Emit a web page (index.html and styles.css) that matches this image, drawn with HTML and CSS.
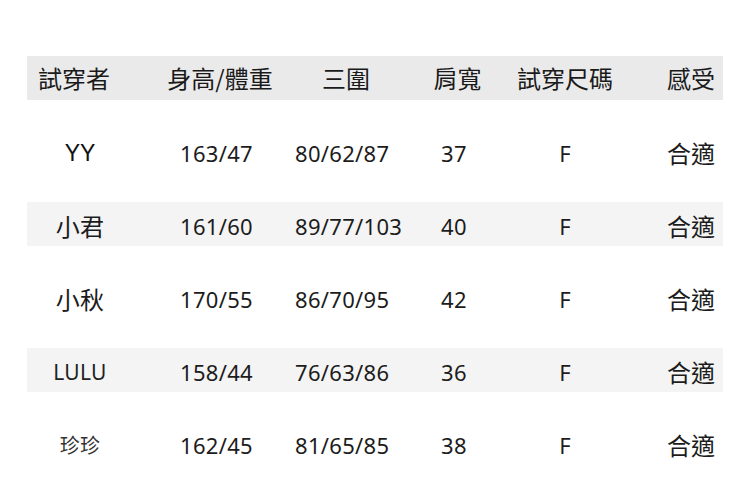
FILE: index.html
```html
<!DOCTYPE html>
<html lang="zh-Hant">
<head>
<meta charset="utf-8">
<link rel="stylesheet" href="styles.css">
</head>
<body>
<div class="size-table">
  <div class="row head">
    <div class="c c1">試穿者</div>
    <div class="c c2">身高/體重</div>
    <div class="c c3">三圍</div>
    <div class="c c4">肩寬</div>
    <div class="c c5">試穿尺碼</div>
    <div class="c c6">感受</div>
  </div>
  <div class="row">
    <div class="c c1 latin">YY</div>
    <div class="c c2">163/47</div>
    <div class="c c3">80/62/87</div>
    <div class="c c4">37</div>
    <div class="c c5">F</div>
    <div class="c c6">合適</div>
  </div>
  <div class="row shade">
    <div class="c c1">小君</div>
    <div class="c c2">161/60</div>
    <div class="c c3">89/77/103</div>
    <div class="c c4">40</div>
    <div class="c c5">F</div>
    <div class="c c6">合適</div>
  </div>
  <div class="row">
    <div class="c c1">小秋</div>
    <div class="c c2">170/55</div>
    <div class="c c3">86/70/95</div>
    <div class="c c4">42</div>
    <div class="c c5">F</div>
    <div class="c c6">合適</div>
  </div>
  <div class="row shade">
    <div class="c c1 small">LULU</div>
    <div class="c c2">158/44</div>
    <div class="c c3">76/63/86</div>
    <div class="c c4">36</div>
    <div class="c c5">F</div>
    <div class="c c6">合適</div>
  </div>
  <div class="row">
    <div class="c c1 light">珍珍</div>
    <div class="c c2">162/45</div>
    <div class="c c3">81/65/85</div>
    <div class="c c4">38</div>
    <div class="c c5">F</div>
    <div class="c c6">合適</div>
  </div>
</div>
</body>
</html>
```
FILE: styles.css
```css
html, body {
  margin: 0;
  padding: 0;
  background: #ffffff;
}
body {
  font-family: "Noto Sans", "Noto Sans CJK TC", sans-serif;
  color: #1c1c1c;
}
.size-table {
  margin: 56px 0 0 27px;
  width: 696px;
  display: flex;
  flex-direction: column;
  gap: 29px;
}
.row {
  height: 44px;
  display: grid;
  grid-template-columns: 123px 140px 120px 95px 120px 98px;
  align-items: center;
  font-size: 22px;
  letter-spacing: 0.3px;
}
.row.head {
  background: #ebeaeb;
  font-family: "Noto Sans CJK TC", sans-serif;
  font-size: 24px;
  letter-spacing: 0;
  color: #1a1a1a;
}
.row.shade {
  background: #f4f4f4;
}
.c {
  line-height: 44px;
  padding-top: 2px;
  white-space: nowrap;
}
.head .c {
  padding-top: 0;
}
.c1 {
  text-align: center;
  padding-right: 17px;
  font-family: "Noto Sans CJK TC", sans-serif;
  font-size: 24px;
}
.head .c1 {
  text-align: left;
  padding-left: 11px;
  padding-right: 0;
}
.c1.latin {
  font-family: "Liberation Sans", Arial, sans-serif;
  font-size: 23px;
  letter-spacing: 0;
  color: #111;
}
.c1.small {
  font-family: "Noto Sans", sans-serif;
  font-size: 21px;
  color: #222;
}
.c1.light {
  font-size: 20px;
  color: #333;
}
.c2 {
  padding-left: 30px;
}
.head .c2 {
  padding-left: 0;
  text-align: center;
}
.c3 {
  padding-left: 5px;
}
.head .c3 {
  padding-left: 0;
  padding-right: 8px;
  text-align: center;
}
.c4 {
  padding-left: 31px;
}
.head .c4 {
  padding-left: 0;
  text-align: center;
}
.c5 {
  text-align: center;
}
.c6 {
  text-align: right;
  padding-right: 8px;
  font-family: "Noto Sans CJK TC", sans-serif;
  font-size: 24px;
  letter-spacing: 0;
}
```
